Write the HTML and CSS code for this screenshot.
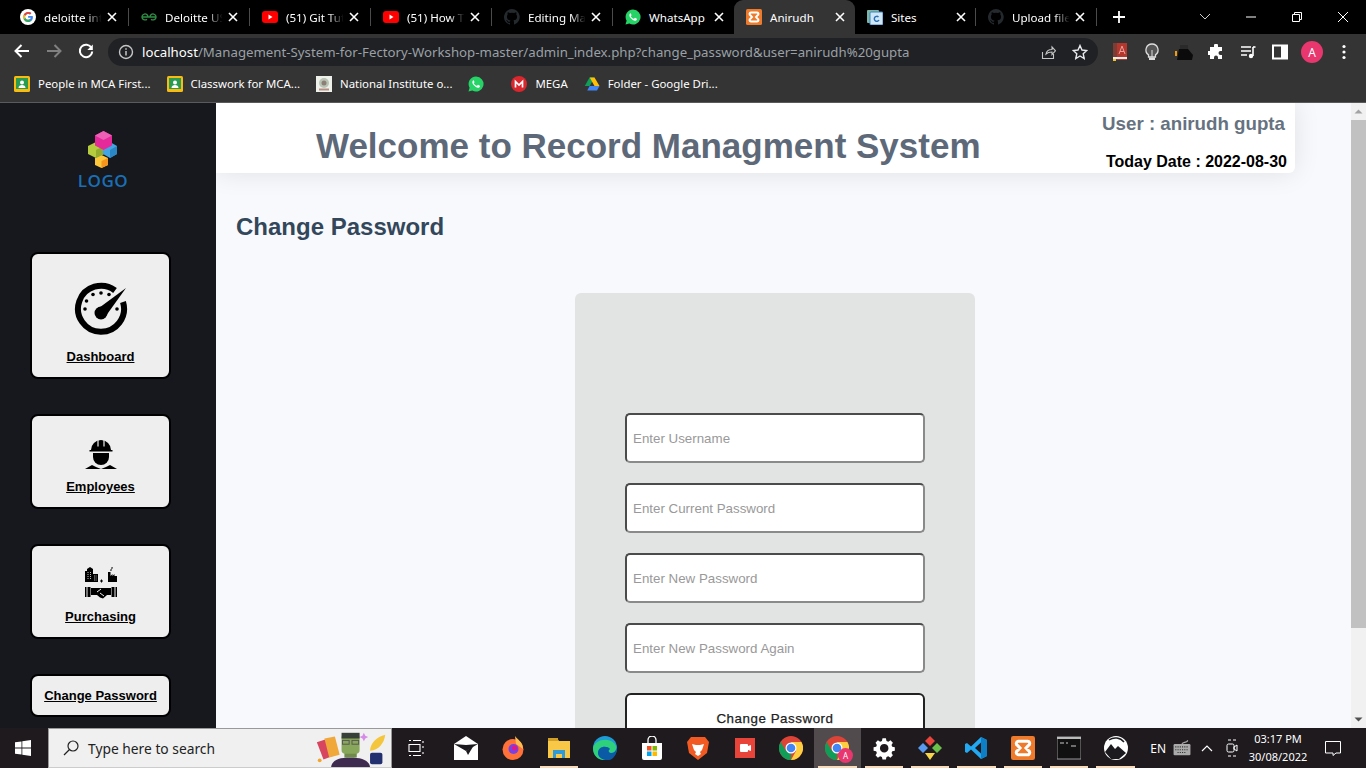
FILE: index.html
```html
<!DOCTYPE html>
<html lang="en">
<head>
  <meta charset="UTF-8">
  <title>Record Management System</title>
  <link rel="stylesheet" href="styles.css">
</head>
<body>
  <svg class="defs" width="0" height="0">
    <symbol id="x" viewBox="0 0 10 10"><path d="M1 1l8 8M9 1l-8 8" stroke="#fff" stroke-width="1.6" fill="none"/></symbol>
    <symbol id="yt" viewBox="0 0 16 16"><rect y="2" width="16" height="12" rx="3" fill="#f00"/><path d="M6.5 5.5l4 2.5-4 2.5z" fill="#fff"/></symbol>
    <symbol id="gh" viewBox="0 0 16 16"><path fill="#24292e" d="M8 0a8 8 0 0 0-2.5 15.6c.4.1.5-.2.5-.4v-1.4c-2.2.5-2.7-1-2.7-1-.4-.9-.9-1.2-.9-1.2-.7-.5.1-.5.1-.5.8.1 1.2.8 1.2.8.7 1.2 1.9.9 2.3.7.1-.5.3-.9.5-1.1-1.8-.2-3.6-.9-3.6-4 0-.9.3-1.6.8-2.1-.1-.2-.4-1 .1-2.1 0 0 .7-.2 2.2.8a7.6 7.6 0 0 1 4 0c1.5-1 2.2-.8 2.2-.8.4 1.1.2 1.9.1 2.1.5.6.8 1.3.8 2.1 0 3.1-1.9 3.7-3.7 3.9.3.3.6.8.6 1.5v2.2c0 .2.1.5.5.4A8 8 0 0 0 8 0z"/></symbol>
    <symbol id="wa" viewBox="0 0 16 16"><path fill="#25d366" d="M8 .5a7.5 7.5 0 0 0-6.4 11.3L.5 15.500l3.800-1A7.500 7.500 0 1 0 8 .5z"/><path fill="#fff" d="M5.600 4.200c-.3 0-.8.3-1 .8-.5 1.200-.2 2.600 1 4.100 1.400 1.700 3.100 2.600 4.400 2.700.9 0 1.700-.6 1.900-1.300.1-.4.1-.7 0-.8l-1.800-.9c-.2 0-.3 0-.4.2l-.6.7c-.1.1-.3.2-.5.1-1.200-.5-2.100-1.300-2.700-2.400-.1-.2 0-.3.1-.4l.4-.5c.1-.1.1-.3.1-.4l-.7-1.700c-.1-.2-.2-.2-.3-.2z"/></symbol>
    <symbol id="xampp" viewBox="0 0 16 16"><rect width="16" height="16" rx="1.5" fill="#ee7a2b"/><path fill="none" stroke="#fff" stroke-width="2" d="M5 3.500h6a1.500 1.500 0 0 1 .5 2.900L10 8l1.500 1.600a1.500 1.500 0 0 1-.5 2.900H5a1.500 1.500 0 0 1-.5-2.900L6 8 4.500 6.400A1.500 1.500 0 0 1 5 3.500z"/></symbol>
    <symbol id="classroom" viewBox="0 0 16 16"><rect width="16" height="16" rx="1.5" fill="#f9bb12"/><rect x="2" y="2" width="12" height="11" fill="#2a9c52"/><circle cx="8" cy="6.5" r="2" fill="#fff"/><path d="M4.500 12c0-2 1.500-3 3.500-3s3.500 1 3.500 3z" fill="#fff"/></symbol>
    <symbol id="chrome" viewBox="0 0 24 24"><circle cx="12" cy="12" r="12" fill="#db4437"/><path d="M12 24a12 12 0 0 1-10.400-18L7 15l5 2z" fill="#0f9d58"/><path d="M12 24a12 12 0 0 0 10.400-18H12l5 9z" fill="#ffcd40"/><circle cx="12" cy="12" r="5.5" fill="#fff"/><circle cx="12" cy="12" r="4.300" fill="#4285f4"/></symbol>
  </svg>

  <div class="tabstrip">
    <div class="tab">
      <svg class="fav" viewBox="0 0 16 16"><circle cx="8" cy="8" r="8" fill="#fff"/><path d="M12.700 6.900H8.100v1.900h2.700c-.3 1.300-1.400 2-2.700 2a3 3 0 1 1 1.900-5.300l1.400-1.400A5 5 0 1 0 8.100 13c2.800 0 4.800-2 4.800-4.800 0-.5-.1-.9-.2-1.300z" fill="#4285f4"/><path d="M3.700 5.600l1.600 1.200a3 3 0 0 1 4.700-1.300l1.400-1.400A5 5 0 0 0 3.700 5.600z" fill="#ea4335"/><path d="M3.700 10.400l1.600-1.200a3 3 0 0 1 0-2.400L3.700 5.600a5 5 0 0 0 0 4.800z" fill="#fbbc05"/><path d="M8.100 13a5 5 0 0 1-4.400-2.600l1.600-1.200a3 3 0 0 0 4.400 1.100l1.500 1.300A5 5 0 0 1 8.100 13z" fill="#34a853"/></svg>
      <span class="tab-title fade">deloitte int</span><svg class="tab-x"><use href="#x"/></svg>
    </div>
    <div class="tab">
      <svg class="fav" viewBox="0 0 16 16"><path d="M1 8h14M7 8a3 3 0 1 0-1 2.200M9 8a3 3 0 1 1 1 2.200" fill="none" stroke="#2f8d46" stroke-width="1.3"/></svg>
      <span class="tab-title fade">Deloitte US</span><svg class="tab-x"><use href="#x"/></svg>
    </div>
    <div class="tab">
      <svg class="fav"><use href="#yt"/></svg>
      <span class="tab-title fade">(51) Git Tut</span><svg class="tab-x"><use href="#x"/></svg>
    </div>
    <div class="tab">
      <svg class="fav"><use href="#yt"/></svg>
      <span class="tab-title fade">(51) How T</span><svg class="tab-x"><use href="#x"/></svg>
    </div>
    <div class="tab">
      <svg class="fav"><use href="#gh"/></svg>
      <span class="tab-title fade">Editing Ma</span><svg class="tab-x"><use href="#x"/></svg>
    </div>
    <div class="tab tab-nosep">
      <svg class="fav"><use href="#wa"/></svg>
      <span class="tab-title">WhatsApp</span><svg class="tab-x"><use href="#x"/></svg>
    </div>
    <div class="tab tab-active">
      <svg class="fav"><use href="#xampp"/></svg>
      <span class="tab-title">Anirudh</span><svg class="tab-x"><use href="#x"/></svg>
    </div>
    <div class="tab">
      <svg class="fav" viewBox="0 0 16 16"><rect x="0" y="1" width="12" height="13" rx="1" fill="#7fb7a6"/><rect x="3" y="3" width="13" height="13" rx="1" fill="#cfe6f5" stroke="#3a84c9"/><path d="M11.500 8a2.500 2.500 0 1 0 .5 3" fill="none" stroke="#2a6fb8" stroke-width="1.4"/></svg>
      <span class="tab-title">Sites</span><svg class="tab-x"><use href="#x"/></svg>
    </div>
    <div class="tab">
      <svg class="fav"><use href="#gh"/></svg>
      <span class="tab-title fade">Upload file</span><svg class="tab-x"><use href="#x"/></svg>
    </div>
    <svg class="newtab" viewBox="0 0 12 12"><path d="M6 0v12M0 6h12" stroke="#fff" stroke-width="1.8"/></svg>
    <div class="winctl">
      <svg viewBox="0 0 46 12"><path d="M18 3l5 5 5-5" fill="none" stroke="#ccc"/></svg>
      <svg viewBox="0 0 46 12"><path d="M18 6h10" stroke="#fff"/></svg>
      <svg viewBox="0 0 46 12"><path d="M18.500 3.500h7v7h-7zM20.500 3.500v-2h7v7h-2" fill="none" stroke="#fff"/></svg>
      <svg viewBox="0 0 46 12"><path d="M18 1l10 10M28 1L18 11" stroke="#fff"/></svg>
    </div>
  </div>

  <div class="toolbar">
    <svg class="nav-btn" viewBox="0 0 32 16"><path d="M23 8H10M15.500 2L9.500 8l6 6" fill="none" stroke="#fff" stroke-width="2"/></svg>
    <svg class="nav-btn" viewBox="0 0 32 16"><path d="M9 8h13M16.500 2l6 6-6 6" fill="none" stroke="#808080" stroke-width="2"/></svg>
    <svg class="nav-btn" viewBox="0 0 32 16"><path d="M21.500 5a6.200 6.200 0 1 0 .7 3.500" fill="none" stroke="#fff" stroke-width="2"/><path d="M22.800 1.500v5.500h-5.500z" fill="#fff"/></svg>
    <div class="omnibox">
      <svg class="info" viewBox="0 0 16 16"><circle cx="8" cy="8" r="6.5" fill="none" stroke="#c4c7c5" stroke-width="1.4"/><path d="M8 7v4.500M8 4.300v1.500" stroke="#c4c7c5" stroke-width="1.5"/></svg>
      <span class="url"><b>localhost</b>/Management-System-for-Fectory-Workshop-master/admin_index.php?change_password&amp;user=anirudh%20gupta</span>
      <svg class="omni-icon" viewBox="0 0 16 16"><path d="M2.500 8v6.500h11V10M6 10c.5-3 3-4.500 6-4.500V3l3.500 3.800L12 10.500V8c-2.500 0-4.500.5-6 2z" fill="none" stroke="#c4c7c5" stroke-width="1.1"/></svg>
      <svg class="omni-icon" viewBox="0 0 16 16"><path d="M8 1.500l2 4.500 4.800.5-3.600 3.200 1 4.800L8 12l-4.200 2.500 1-4.800L1.200 6.500 6 6z" fill="none" stroke="#e8eaed" stroke-width="1.4"/></svg>
    </div>
    <div class="ext-row">
      <svg class="ext-tall" viewBox="0 0 16 18"><rect x="1" y="0" width="14" height="17" fill="#b5362c"/><rect x="1" y="0" width="4" height="17" fill="#7d3d35"/><path d="M7 11l3-8 3 8M8 8.500h4" fill="none" stroke="#e9a19b"/><rect x="1" y="14" width="14" height="2" fill="#eee"/><rect x="1" y="16" width="3" height="2" fill="#f4c430"/></svg>
      <svg class="ext-tall" viewBox="0 0 16 18"><path d="M8 1a6 6 0 0 0-3.500 10.900V14h7v-2.100A6 6 0 0 0 8 1z" fill="#555" stroke="#ddd" stroke-width="1.3"/><rect x="5" y="14.500" width="6" height="2.500" fill="#ddd"/><path d="M8 14V7" stroke="#ddd"/></svg>
      <svg class="ext-wide" viewBox="0 0 18 16"><path d="M2 16L4 5h9l5 6-1 5z" fill="#0b0b0b"/><path d="M5 1h8v4H5z" fill="#2a2a2a"/><rect x="0" y="7" width="2" height="5" fill="#f39c12"/></svg>
      <svg viewBox="0 0 16 16"><path fill="#fff" d="M6 1.500a2 2 0 0 1 4 0V3h4v4h-1.500a2 2 0 0 0 0 4H14v4h-4v-1.500a2 2 0 0 0-4 0V15H2v-4H.8a2 2 0 0 1 0-4H2V3h4z"/></svg>
      <svg viewBox="0 0 16 16"><path d="M1 3h10M1 7h10M1 11h6" stroke="#fff" stroke-width="1.6"/><path d="M13 3v9" stroke="#fff" stroke-width="1.6"/><circle cx="11" cy="12" r="2.2" fill="#fff"/><path d="M13 3h2.500" stroke="#fff" stroke-width="1.6"/></svg>
      <svg viewBox="0 0 16 16"><rect x="1" y="1.500" width="14" height="13" fill="none" stroke="#fff" stroke-width="2"/><rect x="9" y="2" width="6" height="12" fill="#fff"/></svg>
      <span class="avatar">A</span>
      <svg viewBox="0 0 16 16"><circle cx="8" cy="2.500" r="1.6" fill="#fff"/><circle cx="8" cy="8" r="1.6" fill="#fff"/><circle cx="8" cy="13.500" r="1.6" fill="#fff"/></svg>
    </div>
  </div>

  <div class="bookmarks">
    <a class="bm"><svg class="fav"><use href="#classroom"/></svg>People in MCA First...</a>
    <a class="bm"><svg class="fav"><use href="#classroom"/></svg>Classwork for MCA...</a>
    <a class="bm"><svg class="fav" viewBox="0 0 16 16"><rect width="16" height="16" fill="#eef0ea"/><circle cx="8" cy="7" r="5" fill="#b9c4b5"/><circle cx="8" cy="7" r="2.5" fill="#8d7f78"/><rect x="3" y="12.500" width="10" height="2" fill="#b58f86"/></svg>National Institute o...</a>
    <a class="bm"><svg class="fav"><use href="#wa"/></svg></a>
    <a class="bm bm-mega"><svg class="fav" viewBox="0 0 16 16"><circle cx="8" cy="8" r="8" fill="#d9272e"/><path d="M4.500 11.500v-6l3.500 3.600 3.500-3.600v6" fill="none" stroke="#fff" stroke-width="1.7"/></svg>MEGA</a>
    <a class="bm"><svg class="fav" viewBox="0 0 16 16"><path d="M5.500 1.500h5L5.700 10H.8z" fill="#0f9d58"/><path d="M10.500 1.500l5 8.500h-5L5.700 1.500z" fill="#ffc107"/><path d="M3.200 14.500L5.700 10h9.800l-2.500 4.500z" fill="#4285f4"/></svg>Folder - Google Dri...</a>
  </div>

  <div class="app">
    <aside class="sidebar">
      <div class="logo">
        <svg class="logo-mark" viewBox="0 0 30 38">
          <path d="M14.500 24L21 27V34L14.500 37L8 34V27Z" fill="#fdc73c"/><path d="M14.500 30L21 27V34L14.500 37Z" fill="#f7941e"/>
          <path d="M9 11L17 15V23L9 27L1 23V15Z" fill="#b4cc3e"/><path d="M9 19L17 15V23L9 27Z" fill="#93ab2f"/>
          <path d="M23 11L30 15V23L23 27L16 23V15Z" fill="#43a5e2"/><path d="M23 19L30 15V23L23 27Z" fill="#2b86c5"/>
          <path d="M16.500 0L25 4.500V14.500L16.500 19L8 14.500V4.500Z" fill="#e6299a"/><path d="M16.500 0L25 4.500L16.500 9L8 4.500Z" fill="#ee5fb6"/>
        </svg>
        <span class="logo-text">LOGO</span>
      </div>
      <nav class="side-nav">
        <a class="nav-card nav-card-tall">
          <svg class="card-icon gauge" viewBox="-27 -27 54 54">
            <path d="M14 -18.500A23 23 0 1 0 22 -7" fill="none" stroke="#000" stroke-width="6"/>
            <circle cx="-16" cy="0" r="1.8"/><circle cx="-14.500" cy="-8" r="1.8"/><circle cx="-8" cy="-14.500" r="1.8"/><circle cx="0" cy="-16" r="1.8"/><circle cx="8" cy="-14.500" r="1.8"/><circle cx="16" cy="0" r="1.8"/>
            <circle cx="0" cy="4" r="6.5"/><path d="M-3.500 0L25 -21L4.500 7.500z"/>
          </svg>
          <span>Dashboard</span>
        </a>
        <a class="nav-card">
          <svg class="card-icon worker" viewBox="0 0 32 32">
            <path d="M6 13a10 10 0 0 1 20 0h1.500v1.500h-23V13z"/>
            <path d="M13 1.500v8M19 1.500v8" stroke="#eee" stroke-width="1.2"/>
            <path d="M8 16h16v4a8 8 0 0 1-16 0z"/>
            <path d="M0 32l7-4 4 2 5 2 5-2 4-2 7 4z"/>
          </svg>
          <span>Employees</span>
        </a>
        <a class="nav-card">
          <svg class="card-icon purchase" viewBox="0 0 32 32">
            <path d="M0 15V4h2V2l3-2 3 2v13z"/><rect x="8" y="7" width="5" height="8"/>
            <path d="M9 9h3M9 11h3M9 13h3" stroke="#eee" stroke-width=".7" stroke-dasharray="1 .6"/>
            <path d="M3 5v7M5.500 5v7" stroke="#eee" stroke-width=".8" stroke-dasharray="1 1"/>
            <rect x="15" y="13.500" width="3" height="1"/><rect x="16" y="12.500" width="1" height="3"/>
            <path d="M23 15V5h2.500v4l2-2v2l2-2v2h2.500v6z"/><path d="M26 4c-1-2 2-2 1-4" fill="none" stroke="#000"/>
            <rect x="0" y="20" width="1.5" height="10"/><rect x="2.500" y="20" width="3" height="10"/><rect x="26.500" y="20" width="3" height="10"/><rect x="30.500" y="20" width="1.5" height="10"/>
            <path d="M6 21h20v7h-4l-4 3.500-3-1-3-2.500H6z"/><path d="M12 25l4-3M15 26l4 3" stroke="#eee" fill="none"/>
          </svg>
          <span>Purchasing</span>
        </a>
        <a class="nav-card nav-card-short"><span>Change Password</span></a>
      </nav>
    </aside>

    <main class="content">
      <header class="topbar">
        <h1>Welcome to Record Managment System</h1>
        <div class="topbar-user">
          <span class="username">User : anirudh gupta</span>
          <span class="today">Today Date : 2022-08-30</span>
        </div>
      </header>
      <h2>Change Password</h2>
      <form class="pw-form">
        <input type="text" placeholder="Enter Username">
        <input type="password" placeholder="Enter Current Password">
        <input type="password" placeholder="Enter New Password">
        <input type="password" placeholder="Enter New Password Again">
        <button type="button">Change Password</button>
      </form>
    </main>

    <div class="scrollbar">
      <svg class="sb-arrow" viewBox="0 0 15 17"><path d="M3.500 10.500l4-4 4 4z" fill="#a3a3a3"/></svg>
      <div class="sb-thumb"></div>
      <svg class="sb-arrow sb-end" viewBox="0 0 15 17"><path d="M3.500 6.500l4 4 4-4z" fill="#505050"/></svg>
    </div>
  </div>

  <footer class="taskbar">
    <svg class="start" viewBox="0 0 16 16"><path fill="#fff" d="M0 2.300l6.500-.9v6.200H0zM7.300 1.300L16 0v7.600H7.300zM0 8.400h6.500v6.200L0 13.700zM7.300 8.400H16V16l-8.700-1.200z"/></svg>
    <div class="search">
      <svg class="search-ico" viewBox="0 0 16 16"><circle cx="10" cy="6" r="5" fill="none" stroke="#222" stroke-width="1.2"/><path d="M6.500 9.500L1 15" stroke="#222" stroke-width="1.3"/></svg>
      <span>Type here to search</span>
      <svg class="search-art" viewBox="0 0 78 40">
        <path d="M2 14l12-4 6 18-11 4z" fill="#d8455f"/><path d="M10 10l11-2 5 19-11 3z" fill="#f1a83a"/>
        <path d="M17 40c1-7 8-10 20-10s20 3 21 10z" fill="#3f2a50"/>
        <rect x="31" y="22" width="13" height="8" fill="#6f8a4a"/>
        <rect x="28" y="5" width="19" height="21" rx="4" fill="#88a75a"/><rect x="28" y="4" width="19" height="6" fill="#38403a"/>
        <rect x="29" y="12" width="7" height="4" fill="none" stroke="#555"/><rect x="39" y="12" width="7" height="4" fill="none" stroke="#555"/>
        <path d="M51.500 4l1.500 3 3 1.500-3 1.500-1.500 3-1.500-3-3-1.500 3-1.500z" fill="#d78be8"/>
        <path d="M58 23c0-8 7-15 16-17-1 9-7 16-16 17z" fill="#f4c63d"/>
        <rect x="58" y="25" width="13" height="12" rx="2" fill="#223070"/>
        <circle cx="5" cy="33" r="2" fill="#f4a52c"/>
      </svg>
    </div>
    <div class="task-view"><svg viewBox="0 0 16 16"><path d="M1 .5h2M1 15.500h2M5 .5h8M5 15.500h8M15 1v2M15 6v2M15 12v2M1 4.500h11v7H1z" fill="none" stroke="#fff" stroke-width="1.1"/></svg></div>
    <div class="task-apps">
      <div class="app-ico"><svg viewBox="0 0 24 24"><path d="M0 8l12-8 12 8v16H0z" fill="#fff"/><path d="M0 8l12 7 12-7-12 1z" fill="#1c1a1e"/><path d="M12 15l8-6-6 10z" fill="#1c1a1e"/></svg></div>
      <div class="app-ico"><svg viewBox="0 0 24 24"><circle cx="12" cy="13.500" r="10.500" fill="#ff7139"/><path d="M14 0c3 4 8 6 8 13l-7-5z" fill="#ffbd4f"/><circle cx="12.500" cy="13" r="5" fill="#7542e5"/><circle cx="13.500" cy="12" r="2.5" fill="#e31587"/></svg></div>
      <div class="app-ico app-run"><svg viewBox="0 0 24 24"><path d="M1 2h9l2 3h11v17H1z" fill="#f9c846"/><rect x="1" y="2" width="10" height="3" fill="#d2a02a"/><path d="M6 22v-8h12v8h-3v-4H9v4z" fill="#2e9bd8"/></svg></div>
      <div class="app-ico"><svg viewBox="0 0 24 24"><circle cx="12" cy="12" r="12" fill="#1e9ad6"/><path d="M0 12C2 4 14 1 21 7c4 4 2 10-3 10-3 0-3-3-1-4-3-4-12-3-12 4 0 4 5 8 11 6-6 3-16 0-16-11z" fill="#2fd07c"/><path d="M5 17c0-7 9-8 12-4-2 1-2 4 1 4 3 0 5-2 6-5 0 6-4 12-8 12-6 1-11-3-11-7z" fill="#0b5aa5"/></svg></div>
      <div class="app-ico"><svg viewBox="0 0 24 24"><path d="M2 7h20v15a2 2 0 0 1-2 2H4a2 2 0 0 1-2-2z" fill="#fff"/><path d="M8 7V4a4 4 0 0 1 8 0v3" fill="none" stroke="#fff" stroke-width="1.3"/><rect x="7" y="10" width="4.500" height="4.500" fill="#f25022"/><rect x="12.500" y="10" width="4.500" height="4.500" fill="#7fba00"/><rect x="7" y="15.500" width="4.500" height="4.500" fill="#00a4ef"/><rect x="12.500" y="15.500" width="4.500" height="4.500" fill="#ffb900"/></svg></div>
      <div class="app-ico"><svg viewBox="0 0 24 24"><path d="M5 1h14l4 5-2 11-9 7-9-7L1 6z" fill="#f15a22"/><path d="M6 8l4 1h4l4-1-2 6-2 2 1 2-3 2-3-2 1-2-2-2z" fill="#fff"/></svg></div>
      <div class="app-ico"><svg viewBox="0 0 24 24"><rect x="2" y="2" width="20" height="20" fill="#e8443a"/><rect x="7" y="8" width="8" height="8" rx="1" fill="#fff"/><path d="M15 10l3-1v6l-3-1z" fill="#fff"/></svg></div>
      <div class="app-ico"><svg viewBox="0 0 24 24"><use href="#chrome"/></svg></div>
      <div class="app-ico app-active app-run">
        <svg viewBox="0 0 24 24"><use href="#chrome"/></svg>
        <span class="chrome-badge">A</span>
      </div>
      <div class="app-ico app-run"><svg viewBox="0 0 24 24"><path fill="#fff" fill-rule="evenodd" d="M10 1h4l.7 3 2.100.9 2.600-1.600 2.800 2.800-1.600 2.600.9 2.100 3 .7v4l-3 .7-.9 2.100 1.600 2.600-2.800 2.800-2.600-1.600-2.100.9-.7 3h-4l-.7-3-2.100-.9-2.600 1.600-2.800-2.800 1.600-2.600-.9-2.100-3-.7v-4l3-.7.9-2.100L1.800 6.100l2.800-2.800 2.600 1.600 2.100-.9zM12 7.500a5 5 0 1 0 0 10 5 5 0 0 0 0-10z" transform="translate(2 1.500) scale(.85)"/></svg></div>
      <div class="app-ico app-run"><svg viewBox="0 0 24 24"><path d="M12 0l5 5-5 5-5-5z" fill="#e8453c"/><path d="M0 12l5-5 5 5-5 5z" fill="#5a9bf0"/><path d="M24 12l-5-5-5 5 5 5z" fill="#6cc04a"/><path d="M12 24l-5-7h10z" fill="#f5d64a"/></svg></div>
      <div class="app-ico app-run"><svg viewBox="0 0 24 24"><path d="M17 1l6 3v16l-6 3L7 13.500 3 17l-2-1V8l2-1 4 3.500z" fill="#23a9f2"/><path d="M17 6.500L11 12l6 5.500z" fill="#1c1a1e"/><path d="M17 1l6 3v16l-6 3z" fill="#0e7fc7"/></svg></div>
      <div class="app-ico app-run"><svg viewBox="0 0 24 24"><use href="#xampp"/></svg></div>
      <div class="app-ico app-run"><svg viewBox="0 0 24 24"><rect width="24" height="22" y="1" fill="#111" stroke="#999"/><rect y="1" width="24" height="2" fill="#bbb"/><path d="M3 7h4M9 7h2M14 10h5" stroke="#ccc"/></svg></div>
      <div class="app-ico app-run"><svg viewBox="0 0 24 24"><circle cx="12" cy="12" r="12" fill="#fff"/><path d="M1 16l6-8 4 5 3-3 8 7-7 6H7z" fill="#1c1a1e"/><path d="M5 4a11 11 0 0 1 15 2" fill="none" stroke="#1c1a1e" stroke-width="1.5"/></svg></div>
    </div>
    <div class="tray">
      <span class="lang">EN</span>
      <svg class="tray-kbd" viewBox="0 0 16 16"><rect x=".5" y="4.500" width="15" height="10" rx="1" fill="#aaa"/><path d="M2 7h12M2 9.500h12M4 12h8" stroke="#333" stroke-dasharray="1 1"/><path d="M8 4.500c0-2 5-1 5-3.500" fill="none" stroke="#aaa"/></svg>
      <svg class="tray-chev" viewBox="0 0 12 8"><path d="M1 7l5-5 5 5" fill="none" stroke="#fff" stroke-width="1.2"/></svg>
      <svg class="tray-meet" viewBox="0 0 12 18"><path d="M2 1h3M7 1h3M2 17h3M7 17h3" stroke="#fff"/><rect x="1" y="5" width="7" height="8" rx="1.5" fill="none" stroke="#fff"/><path d="M8 8l3-2v6l-3-2z" fill="none" stroke="#fff"/></svg>
      <div class="clock"><span>03:17 PM</span><span>30/08/2022</span></div>
      <svg class="tray-note" viewBox="0 0 16 16"><path d="M.5 1.500h15v11.500h-4.500l-3 2.500v-2.500H.5z" fill="none" stroke="#fff"/></svg>
    </div>
  </footer>
</body>
</html>
```

FILE: styles.css
```css
* { box-sizing: border-box; }
body { margin: 0; width: 1366px; height: 768px; overflow: hidden; display: flex; flex-direction: column; background: #f8f9fd; font-family: 'Liberation Sans', sans-serif; }
.defs { position: absolute; }
.fav { width: 16px; height: 16px; flex: none; }

.tabstrip { height: 34px; background: #000; display: flex; align-items: center; padding-left: 8px; flex: none; }
.tab { width: 121px; height: 34px; display: flex; align-items: center; padding: 0 10px 0 12px; color: #fff; font: 11.6px 'Noto Sans', sans-serif; position: relative; }
.tab::after { content: ''; position: absolute; right: 0; top: 8px; height: 18px; width: 1px; background: #4b4b4b; }
.tab-nosep::after, .tab-active::after { display: none; }
.tab-active { background: #343434; border-radius: 9px 9px 0 0; }
.tab-title { flex: 1; margin: 0 4px 0 8px; white-space: nowrap; }
.tab-title.fade { flex: none; width: 60px; margin-right: 3px; -webkit-mask-image: linear-gradient(90deg, #000 70%, transparent 96%); mask-image: linear-gradient(90deg, #000 70%, transparent 96%); }
.tab-x { width: 10px; height: 10px; flex: none; }
.newtab { width: 12px; height: 12px; margin-left: 16px; }
.winctl { margin-left: auto; display: flex; }
.winctl svg { width: 46px; height: 12px; }

.toolbar { height: 33px; background: #343434; display: flex; align-items: center; padding-left: 6px; flex: none; }
.nav-btn { width: 32px; height: 16px; }
.omnibox { width: 990px; height: 28px; margin-left: 6px; margin-top: 3px; background: #202124; border-radius: 14px; display: flex; align-items: center; padding: 0 10px; }
.info { width: 16px; height: 16px; flex: none; }
.url { flex: 1; margin-left: 8px; font: 13.24px 'Noto Sans', sans-serif; color: #9aa0a6; white-space: nowrap; overflow: hidden; }
.url b { font-weight: 400; color: #fff; }
.omni-icon { width: 16px; height: 16px; margin-left: 16px; flex: none; }
.ext-row { display: flex; align-items: center; margin-left: 6px; margin-top: 3px; }
.ext-row svg { width: 16px; height: 16px; margin: 0 8px; }
.ext-row .ext-tall { height: 18px; }
.ext-row .ext-wide { width: 18px; margin: 0 7px; }
.avatar { width: 22px; height: 22px; margin: 0 5px; border-radius: 50%; background: #e8366f; color: #fff; font: 12px 'Noto Sans', sans-serif; display: flex; align-items: center; justify-content: center; }

.bookmarks { height: 36px; background: #343434; border-bottom: 1px solid #5a5a5a; display: flex; align-items: center; padding: 0 0 2px 14px; gap: 16px; flex: none; }
.bm { display: flex; align-items: center; gap: 8px; color: #fff; font: 11.4px 'Noto Sans', sans-serif; white-space: nowrap; }
.bm-mega { margin-left: 11px; }

.app { flex: 1; min-height: 0; display: flex; }
.sidebar { width: 216px; flex: none; background: #16181d; overflow: hidden; }
.logo { height: 149px; width: 206px; padding-top: 28px; display: flex; flex-direction: column; align-items: center; }
.logo-mark { width: 30px; height: 38px; margin-right: 3px; }
.logo-text { color: #1a6fb5; font: 600 17px 'Open Sans', sans-serif; letter-spacing: .5px; line-height: 20px; margin-top: 2px; }
.side-nav { display: flex; flex-direction: column; gap: 35px; margin-left: 30px; width: 141px; }
.nav-card { height: 95px; background: #eee; border: 2px solid #000; border-radius: 8px; color: #000; display: flex; flex-direction: column; align-items: center; justify-content: flex-end; padding-bottom: 13px; font-size: 13px; font-weight: 700; text-decoration: underline; }
.nav-card-tall { height: 127px; }
.nav-card-short { height: 43px; justify-content: center; padding-bottom: 0; }
.card-icon { display: block; margin-bottom: 8px; }
.gauge { width: 54px; height: 54px; margin-bottom: 13px; }
.worker { width: 32px; height: 32px; margin-bottom: 10px; }
.purchase { width: 32px; height: 32px; margin-bottom: 10px; }

.content { flex: 1; min-width: 0; overflow: hidden; }
.topbar { width: 1079px; height: 70px; background: #fff; border-radius: 0 0 6px 0; box-shadow: 0 0 26px rgba(0,0,0,.1); display: flex; justify-content: space-between; padding: 0 8px 2px 100px; align-items: stretch; }
.topbar h1 { margin: 24px 0 0; font-size: 35px; line-height: 38px; color: #5d6978; }
.topbar-user { display: flex; flex-direction: column; justify-content: space-between; align-items: flex-end; padding-top: 10px; }
.username { font-size: 18.72px; font-weight: 700; color: #667280; margin-right: 2px; }
.today { font-size: 16px; font-weight: 700; color: #000; }
.content h2 { margin: 40px 0 0 20px; font-size: 24px; line-height: 28px; color: #33475b; }
.pw-form { width: 400px; height: 500px; margin: 52px 0 0 359px; padding: 120px 50px 0; background: #e2e3e3; border-radius: 6px; display: flex; flex-direction: column; gap: 20px; }
.pw-form input { height: 50px; border: 2px solid; border-color: #4b4b4b #8a8a8a #8a8a8a #4b4b4b; border-radius: 5px; background: #fff; padding: 0 6px; font: 13.33px 'Liberation Sans', sans-serif; }
.pw-form input::placeholder { color: #999; }
.pw-form button { height: 50px; flex: none; background: #fff; border: 2px solid #222; border-radius: 6px; font: 13.33px 'Liberation Sans', sans-serif; letter-spacing: .55px; -webkit-text-stroke: .25px #222; color: #222; }

.scrollbar { width: 15px; flex: none; background: #f1f1f1; display: flex; flex-direction: column; }
.sb-arrow { width: 15px; height: 17px; flex: none; }
.sb-thumb { height: 508px; background: #c1c1c1; }
.sb-end { margin-top: auto; }

.taskbar { height: 40px; flex: none; background: #1e1a1e; display: flex; align-items: center; color: #fff; }
.start { width: 16px; height: 16px; margin: 0 17px 0 15px; flex: none; }
.search { width: 344px; height: 40px; background: #f0f0f0; border: 1px solid #999; border-bottom-color: #ccc; display: flex; align-items: center; padding-left: 14px; color: #222; font: 13.8px 'Noto Sans', sans-serif; }
.search-ico { width: 16px; height: 16px; margin-right: 9px; }
.search-art { width: 78px; height: 38px; margin-left: auto; }
.task-view { width: 50px; display: flex; justify-content: center; margin: 0 2px 0 -1px; }
.task-view svg { width: 16px; height: 16px; }
.task-apps { display: flex; }
.app-ico { width: 46.4px; height: 40px; display: flex; align-items: center; justify-content: center; position: relative; }
.app-ico svg { width: 24px; height: 24px; }
.app-run::after { content: ''; position: absolute; left: 4px; right: 4px; bottom: 0; height: 2px; background: #f8d9b8; }
.app-active { background: #514b4e; }
.chrome-badge { position: absolute; left: 24px; top: 20px; width: 15px; height: 15px; border-radius: 50%; background: #e8366f; color: #fff; font: 8px 'Noto Sans', sans-serif; display: flex; align-items: center; justify-content: center; }
.tray { margin-left: auto; display: flex; align-items: center; font: 11px 'Noto Sans', sans-serif; padding-right: 25px; }
.lang { margin-right: 7px; font-size: 12px; }
.tray-kbd { width: 18px; height: 18px; margin-right: 10px; }
.tray-chev { width: 12px; height: 8px; margin-right: 13px; }
.tray-meet { width: 12px; height: 18px; margin-right: 8px; }
.clock { width: 64px; display: flex; flex-direction: column; align-items: center; line-height: 18px; margin-right: 15px; }
.tray-note { width: 16px; height: 16px; }
```
